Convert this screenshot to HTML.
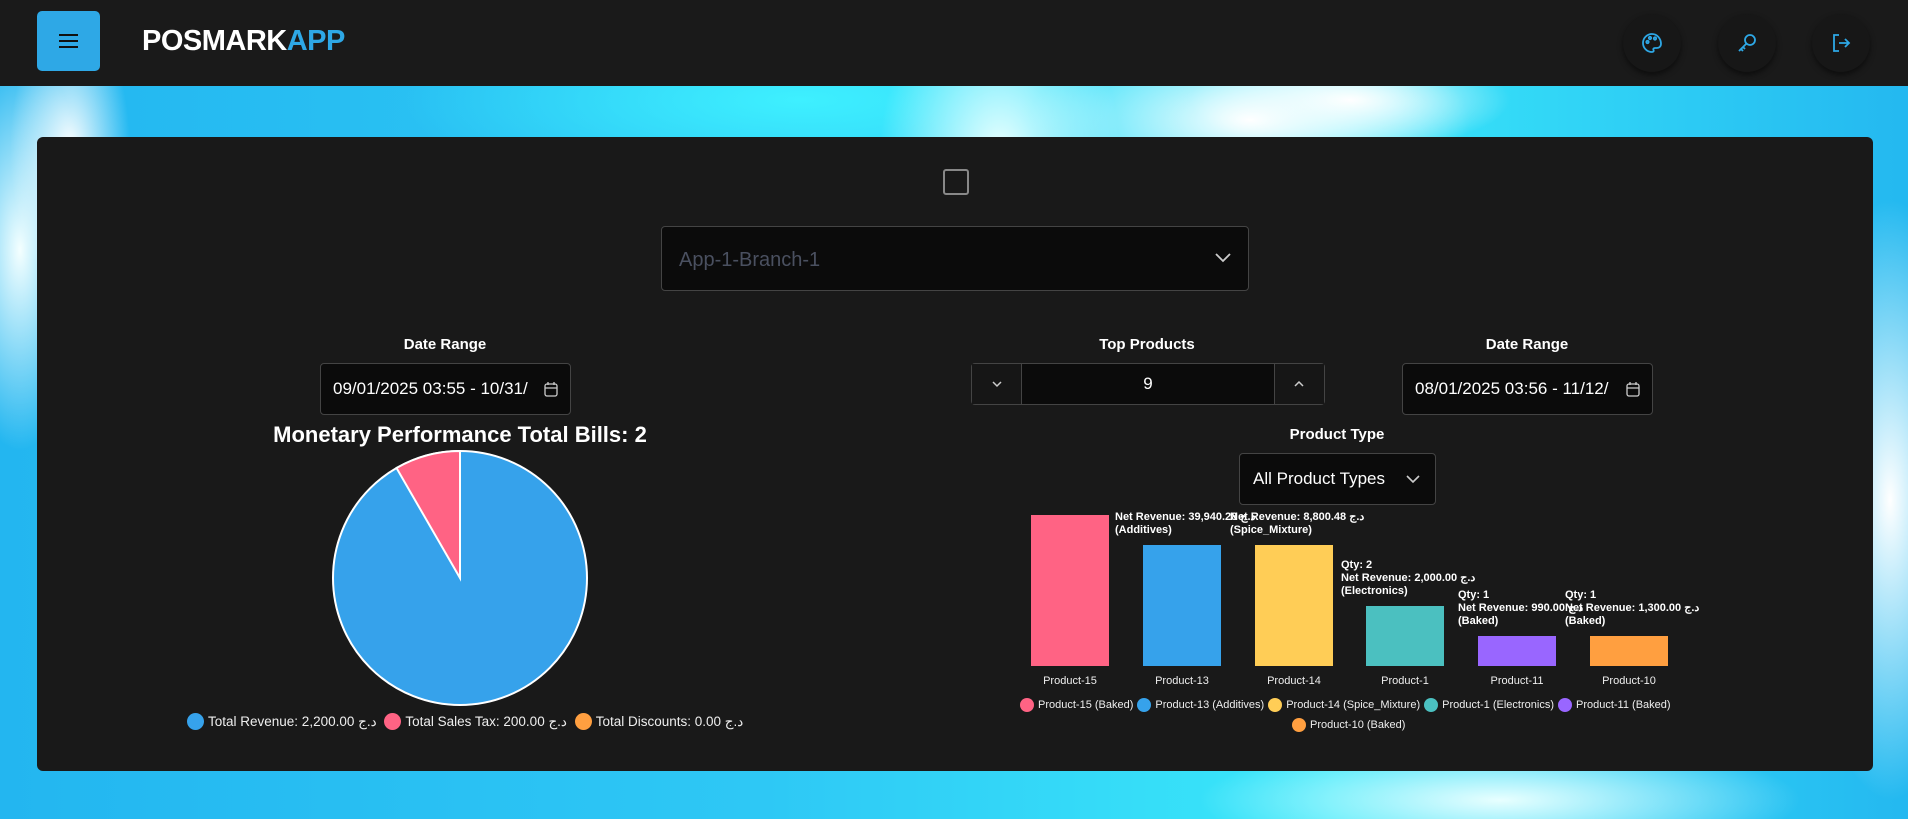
<!DOCTYPE html>
<html><head><meta charset="utf-8"><style>
*{box-sizing:border-box;margin:0;padding:0}
body{width:1908px;height:819px;overflow:hidden;position:relative;font-family:"Liberation Sans","Noto Sans CJK SC",sans-serif;
background:
radial-gradient(ellipse 220px 90px at 1250px 120px,#fff 0,rgba(255,255,255,0) 100%),
radial-gradient(ellipse 120px 160px at 1000px 150px,#e8ffff 0,rgba(255,255,255,0) 100%),
radial-gradient(ellipse 60px 140px at 70px 150px,#fff 0,rgba(255,255,255,0) 100%),
radial-gradient(ellipse 70px 200px at 20px 250px,#f4ffff 0,rgba(255,255,255,0) 100%),
radial-gradient(ellipse 90px 300px at 1890px 500px,#fff 0,rgba(255,255,255,0) 100%),
radial-gradient(ellipse 300px 60px at 1500px 800px,#e8ffff 0,rgba(255,255,255,0) 100%),
radial-gradient(ellipse 160px 50px at 1350px 100px,#fff 0,rgba(255,255,255,0) 100%),
radial-gradient(ellipse 400px 100px at 800px 100px,#3ef0ff 0,rgba(60,240,255,0) 100%),
linear-gradient(90deg,#23b6f0,#2ec8f5 40%,#3ae8fa 70%,#24b8f0);}
.abs{position:absolute}
.hdr{left:0;top:0;width:1908px;height:86px;background:#1a1a1a}
.menu{left:37px;top:11px;width:63px;height:60px;background:#2ea8e6;border-radius:5px}
.menu i{position:absolute;left:22px;width:19px;height:2px;background:#111}
.logo{left:142px;top:25px;font-size:29px;font-weight:bold;color:#fff;letter-spacing:-0.5px}
.logo span{color:#2ea8e6}
.ib{width:58px;height:58px;border-radius:50%;background:#171717;box-shadow:0 3px 6px rgba(0,0,0,.5);top:14px}
.ib svg{position:absolute;left:17px;top:17px}
.card{left:37px;top:137px;width:1836px;height:634px;background:#191919;border-radius:6px}
.cb{left:943px;top:169px;width:26px;height:26px;border:2.5px solid #888;border-radius:3px}
.sel{left:661px;top:226px;width:588px;height:65px;background:#0b0b0b;border:1px solid #444;border-radius:4px;color:#4a5060;font-size:20px;padding:22px 17px}
.lbl{color:#fff;font-size:15px;font-weight:bold;text-align:center;width:300px}
.inp{background:#0b0b0b;border:1px solid #444;border-radius:4px;color:#fff;font-size:17px}
.t{color:#fff;font-size:11px;font-weight:bold;line-height:13px;white-space:nowrap}
.xl{color:#eee;font-size:11px;text-align:center;width:100px}
.lg{color:#eee;font-size:13.5px;white-space:nowrap;display:flex;align-items:center;gap:4px}
.dot{display:inline-block;width:17px;height:17px;border-radius:50%}
.lg2{font-size:11px}
.lg2 .dot{width:14px;height:14px}
</style></head><body>
<div class="abs hdr"></div>
<div class="abs menu"><i style="top:23px"></i><i style="top:29px"></i><i style="top:35px"></i></div>
<div class="abs logo">POSMARK<span>APP</span></div>
<div class="abs ib" style="left:1623px"><svg width="24" height="24" viewBox="0 0 24 24" fill="none" stroke="#2ea8e6" stroke-width="1.8"><path d="M12 3a9 9 0 1 0 0 18c1.5 0 2-1 1.5-2s0-2 1.5-2h2a4 4 0 0 0 4-4c0-5.5-4-10-9-10z"/><circle cx="7.5" cy="11" r="1.2"/><circle cx="10" cy="7" r="1.2"/><circle cx="15" cy="7.5" r="1.2"/></svg></div>
<div class="abs ib" style="left:1718px"><svg width="24" height="24" viewBox="0 0 24 24" fill="none" stroke="#2ea8e6" stroke-width="1.8"><circle cx="15" cy="9" r="5"/><path d="M11.5 12.5L4 20M6 18l2 2M8 16l2 2"/></svg></div>
<div class="abs ib" style="left:1812px"><svg width="24" height="24" viewBox="0 0 24 24" fill="none" stroke="#2ea8e6" stroke-width="1.8"><path d="M10 4H5v16h5M10 12h10M16 8l4 4-4 4"/></svg></div>

<div class="abs card"></div>
<div class="abs cb"></div>
<div class="abs sel">App-1-Branch-1<svg class="abs" style="right:16px;top:25px" width="18" height="12" viewBox="0 0 18 12" fill="none" stroke="#ccc" stroke-width="1.8"><path d="M2 2l7 7 7-7"/></svg></div>

<div class="abs lbl" style="left:295px;top:336px">Date Range</div>
<div class="abs inp" style="left:320px;top:363px;width:251px;height:52px;padding:15px 12px">09/01/2025 03:55 - 10/31/<svg class="abs" style="right:12px;top:18px" width="14" height="15" viewBox="0 0 14 15" fill="none" stroke="#ccc" stroke-width="1.3"><rect x="1" y="2" width="12" height="12" rx="2"/><path d="M1 6h12M4 0v3M10 0v3"/></svg></div>

<div class="abs lbl" style="left:997px;top:336px">Top Products</div>
<div class="abs inp" style="left:971px;top:363px;width:354px;height:42px;border-color:#444"></div>
<div class="abs" style="left:1021px;top:364px;width:1px;height:40px;background:#444"></div>
<div class="abs" style="left:1274px;top:364px;width:1px;height:40px;background:#444"></div>
<div class="abs" style="left:972px;top:364px;width:49px;height:40px;background:#161616"></div>
<div class="abs" style="left:1275px;top:364px;width:49px;height:40px;background:#161616"></div>
<svg class="abs" style="left:991px;top:380px" width="12" height="8" viewBox="0 0 12 8" fill="none" stroke="#ccc" stroke-width="1.5"><path d="M2 2l4 4 4-4"/></svg>
<svg class="abs" style="left:1293px;top:380px" width="12" height="8" viewBox="0 0 12 8" fill="none" stroke="#ccc" stroke-width="1.5"><path d="M2 6l4-4 4 4"/></svg>
<div class="abs" style="left:1022px;top:374px;width:252px;text-align:center;color:#fff;font-size:17px">9</div>

<div class="abs lbl" style="left:1377px;top:336px">Date Range</div>
<div class="abs inp" style="left:1402px;top:363px;width:251px;height:52px;padding:15px 12px">08/01/2025 03:56 - 11/12/<svg class="abs" style="right:12px;top:18px" width="14" height="15" viewBox="0 0 14 15" fill="none" stroke="#ccc" stroke-width="1.3"><rect x="1" y="2" width="12" height="12" rx="2"/><path d="M1 6h12M4 0v3M10 0v3"/></svg></div>

<div class="abs" style="left:160px;top:422px;width:600px;text-align:center;color:#fff;font-size:22px;font-weight:bold">Monetary Performance Total Bills: 2</div>
<svg class="abs" style="left:330px;top:449px" width="260" height="260" viewBox="0 0 260 260">
<circle cx="130" cy="129" r="127" fill="#36a2eb" stroke="#fff" stroke-width="2"/>
<path d="M130 129L130 2A127 127 0 0 0 66.5 19Z" fill="#ff6384" stroke="#fff" stroke-width="2"/>
</svg>
<div class="abs lg" style="left:187px;top:713px"><span class="dot" style="background:#36a2eb"></span>Total Revenue: 2,200.00 د.ج&nbsp;<span class="dot" style="background:#ff6384"></span>Total Sales Tax: 200.00 د.ج&nbsp;<span class="dot" style="background:#ff9f40"></span>Total Discounts: 0.00 د.ج</div>

<div class="abs lbl" style="left:1187px;top:426px">Product Type</div>
<div class="abs inp" style="left:1239px;top:453px;width:197px;height:52px;padding:15px 13px">All Product Types<svg class="abs" style="right:14px;top:20px" width="16" height="10" viewBox="0 0 16 10" fill="none" stroke="#ccc" stroke-width="1.6"><path d="M2 2l6 6 6-6"/></svg></div>

<div class="abs" style="left:1031px;top:515px;width:78px;height:151px;background:#ff6384"></div>
<div class="abs" style="left:1143px;top:545px;width:78px;height:121px;background:#36a2eb"></div>
<div class="abs" style="left:1255px;top:545px;width:78px;height:121px;background:#ffcd56"></div>
<div class="abs" style="left:1366px;top:606px;width:78px;height:60px;background:#4bc0c0"></div>
<div class="abs" style="left:1478px;top:636px;width:78px;height:30px;background:#9966ff"></div>
<div class="abs" style="left:1590px;top:636px;width:78px;height:30px;background:#ff9f40"></div>

<div class="abs t" style="left:1115px;top:511px">Net Revenue: 39,940.28 د.ج<br>(Additives)</div>
<div class="abs t" style="left:1230px;top:511px">Net Revenue: 8,800.48 د.ج<br>(Spice_Mixture)</div>
<div class="abs t" style="left:1341px;top:559px">Qty: 2<br>Net Revenue: 2,000.00 د.ج<br>(Electronics)</div>
<div class="abs t" style="left:1458px;top:589px">Qty: 1<br>Net Revenue: 990.00 د.ج<br>(Baked)</div>
<div class="abs t" style="left:1565px;top:589px">Qty: 1<br>Net Revenue: 1,300.00 د.ج<br>(Baked)</div>

<div class="abs xl" style="left:1020px;top:675px">Product-15</div>
<div class="abs xl" style="left:1132px;top:675px">Product-13</div>
<div class="abs xl" style="left:1244px;top:675px">Product-14</div>
<div class="abs xl" style="left:1355px;top:675px">Product-1</div>
<div class="abs xl" style="left:1467px;top:675px">Product-11</div>
<div class="abs xl" style="left:1579px;top:675px">Product-10</div>

<div class="abs lg lg2" style="left:1020px;top:698px"><span class="dot" style="background:#ff6384"></span>Product-15 (Baked) <span class="dot" style="background:#36a2eb"></span>Product-13 (Additives) <span class="dot" style="background:#ffcd56"></span>Product-14 (Spice_Mixture) <span class="dot" style="background:#4bc0c0"></span>Product-1 (Electronics) <span class="dot" style="background:#9966ff"></span>Product-11 (Baked)</div>
<div class="abs lg lg2" style="left:1292px;top:718px"><span class="dot" style="background:#ff9f40"></span>Product-10 (Baked)</div>
</body></html>
